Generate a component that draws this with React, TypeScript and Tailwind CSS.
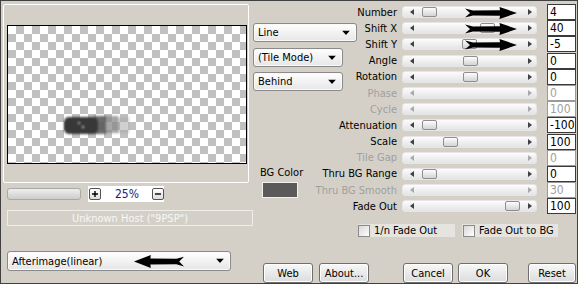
import React from "react";

type Row = { label: string; value: string; thumb?: number; disabled?: boolean; arrow?: boolean };

const rows: Row[] = [
  { label: "Number", value: "4", thumb: 19, arrow: true },
  { label: "Shift X", value: "40", thumb: 77, arrow: true },
  { label: "Shift Y", value: "-5", thumb: 59, arrow: true },
  { label: "Angle", value: "0", thumb: 60 },
  { label: "Rotation", value: "0", thumb: 60 },
  { label: "Phase", value: "0", disabled: true },
  { label: "Cycle", value: "100", disabled: true },
  { label: "Attenuation", value: "-100", thumb: 19 },
  { label: "Scale", value: "100", thumb: 40 },
  { label: "Tile Gap", value: "0", disabled: true },
  { label: "Thru BG Range", value: "0", thumb: 19 },
  { label: "Thru BG Smooth", value: "30", disabled: true },
  { label: "Fade Out", value: "100", thumb: 102 },
];

function BigArrow({ className }: { className?: string }) {
  return (
    <svg viewBox="0 0 52 12" className={className} preserveAspectRatio="none">
      <path
        d="M0 1.5 L8 3.4 L35 3.3 L34.5 0 L52 6 L34.5 12 L35 8.7 L8 8.6 L0 10.5 L5 6 Z"
        fill="#000"
      />
    </svg>
  );
}

function DropArrow({ className }: { className?: string }) {
  return (
    <svg width="8" height="5" viewBox="0 0 8 5" className={className}>
      <path d="M0 0 L8 0 L4 4.5 Z" fill="#000" />
    </svg>
  );
}

function Slider({ thumb, disabled, arrow }: { thumb?: number; disabled?: boolean; arrow?: boolean }) {
  const c = disabled ? "#a9a9a9" : "#404040";
  return (
    <div className="relative w-[135px] h-[12px] rounded-[3px] border border-[#e6e6e6] bg-gradient-to-b from-[#fcfcfc] to-[#e4e4e4]">
      <svg width="4" height="6" viewBox="0 0 4 6" className="absolute left-[7px] top-[2px]">
        <path d="M4 0 L0 3 L4 6 Z" fill={c} />
      </svg>
      <svg width="4" height="6" viewBox="0 0 4 6" className="absolute left-[125px] top-[2px]">
        <path d="M0 0 L4 3 L0 6 Z" fill={c} />
      </svg>
      {thumb !== undefined && (
        <div
          className="absolute top-0 h-[10px] w-[15px] rounded-[2px] border border-[#8e8e8e] bg-gradient-to-b from-[#fdfdfd] to-[#d4d4d4]"
          style={{ left: thumb }}
        />
      )}
      {arrow && <BigArrow className="absolute left-[62px] top-[0px] w-[52px] h-[12px]" />}
    </div>
  );
}

function Dropdown({ label, className, children }: { label: string; className?: string; children?: React.ReactNode }) {
  return (
    <div
      className={`relative flex items-center pl-[4px] rounded-[3px] border border-[#8a8a8a] bg-gradient-to-b from-[#ffffff] to-[#e6e6e6] shadow-[inset_0_0_0_1px_#fafafa] leading-none ${className ?? ""}`}
    >
      <span>{label}</span>
      {children}
      <DropArrow className="absolute right-[6px] top-1/2 -translate-y-1/2" />
    </div>
  );
}

function Btn({ label, className }: { label: string; className?: string }) {
  return (
    <div
      className={`h-[20px] flex items-center justify-center rounded-[3px] border border-[#6f6f6f] bg-gradient-to-b from-[#f8f8f8] to-[#dcdcdc] shadow-[inset_0_0_0_1px_#ffffff] leading-none ${className ?? ""}`}
    >
      {label}
    </div>
  );
}

function CheckBox() {
  return (
    <div className="w-[12px] h-[12px] border border-[#8a8a8a] bg-gradient-to-br from-[#d8d8d8] to-[#ffffff]" />
  );
}

export default function App() {
  return (
    <div className="font-['DejaVu_Sans_Condensed','Liberation_Sans',sans-serif] w-[578px] h-[284px] bg-[#d4d0c8] border border-[#404040] flex flex-col text-[11px] text-black overflow-hidden">
      <div className="flex h-[246px]">
        {/* left column */}
        <div className="w-[252px] pl-[2px] pt-[3px] flex flex-col">
          <div className="w-[246px] h-[179px] border border-white rounded-[2px] pt-[20px] pl-[3px]">
            <div className="w-[240px] h-[139px] border border-black bg-[conic-gradient(#c0c0c0_25%,#ffffff_0_50%,#c0c0c0_0_75%,#ffffff_0)] bg-[length:16px_16px]">
              <svg width="238" height="137" viewBox="0 0 238 137">
                <defs>
                  <filter id="blur" x="-20%" y="-40%" width="140%" height="180%">
                    <feGaussianBlur stdDeviation="1.3" />
                  </filter>
                </defs>
                <g filter="url(#blur)">
                  <rect x="108" y="91" width="13" height="16" fill="#a8a8a8" opacity="0.55" />
                  <rect x="96" y="90" width="14" height="17" fill="#8a8a8a" opacity="0.75" />
                  <rect x="86" y="90" width="12" height="18" fill="#5c5c5c" opacity="0.9" />
                  <rect x="56" y="91" width="34" height="17" rx="5" fill="#383838" />
                  <rect x="70" y="96" width="2" height="2" fill="#8a8a8a" />
                  <rect x="74" y="100" width="2" height="2" fill="#9a9a9a" />
                </g>
              </svg>
            </div>
          </div>
          <div className="flex items-center mt-[3px] ml-[4px] h-[16px]">
            <div className="w-[74px] h-[12px] rounded-[3px] border border-[#a9a9a9] bg-gradient-to-b from-[#eeeeee] to-[#cdcdcd]" />
            <div className="ml-[7px] w-[76px] h-[16px] bg-white flex items-center">
              <div className="ml-[1px] w-[12px] h-[12px] rounded-[2px] border border-[#555] bg-gradient-to-b from-[#ffffff] to-[#dddddd] flex items-center justify-center">
                <svg width="6" height="6" viewBox="0 0 6 6">
                  <path d="M3 0 V6 M0 3 H6" stroke="#000" strokeWidth="1.4" />
                </svg>
              </div>
              <span className="ml-[14px] text-[12px] leading-none text-[#1c1c7a]">25%</span>
              <div className="ml-[13px] w-[12px] h-[12px] rounded-[2px] border border-[#555] bg-gradient-to-b from-[#ffffff] to-[#dddddd] flex items-center justify-center">
                <svg width="6" height="6" viewBox="0 0 6 6">
                  <path d="M0 3 H6" stroke="#000" strokeWidth="1.4" />
                </svg>
              </div>
            </div>
          </div>
          <div className="mt-[8px] ml-[4px] w-[246px] h-[16px] border border-[#eeede9] flex items-center justify-center text-[#f7f7f7] text-[11px] leading-none">
            {'Unknown Host ("9PSP")'}
          </div>
        </div>

        {/* middle column */}
        <div className="w-[104px] pt-[22px] flex flex-col">
          <Dropdown label="Line" className="w-[104px] h-[19px]" />
          <Dropdown label="(Tile Mode)" className="mt-[6px] w-[90px] h-[19px]" />
          <Dropdown label="Behind" className="mt-[5px] w-[90px] h-[19px]" />
          <div className="mt-[75px] ml-[7px] h-[13px] leading-[13px]">BG Color</div>
          <div className="mt-[3px] ml-[9px] w-[36px] h-[16px] border border-[#f2f2f2] bg-[#5a5a5a]" />
        </div>

        {/* right column */}
        <div className="w-[220px] pt-[3px] flex flex-col">
          {rows.map((r) => (
            <div key={r.label} className="flex items-center h-[16.2px]">
              <div
                className={`w-[40px] flex justify-end whitespace-nowrap leading-none ${r.disabled ? "text-[#a0a0a0]" : "text-black"}`}
              >
                {r.label}
              </div>
              <div className="ml-[5px]">
                <Slider thumb={r.thumb} disabled={r.disabled} arrow={r.arrow} />
              </div>
              <div
                className={`ml-[10px] w-[29px] h-[16px] border bg-white flex items-center pl-[2px] text-[12px] leading-none ${r.disabled ? "border-[#9a9a9a] text-[#a0a0a0]" : "border-[#3a3a3a] text-black"}`}
              >
                {r.value}
              </div>
            </div>
          ))}
          <div className="flex mt-[10px] ml-[1px] h-[13px]">
            <div className="w-[97px] h-[13px] bg-[#e6e4df] flex items-center">
              <CheckBox />
              <span className="ml-[4px] leading-none">1/n Fade Out</span>
            </div>
            <div className="ml-[7px] w-[96px] h-[13px] bg-[#e6e4df] flex items-center pl-[1px]">
              <CheckBox />
              <span className="ml-[4px] leading-none">Fade Out to BG</span>
            </div>
          </div>
        </div>
      </div>

      {/* bottom row */}
      <div className="flex h-[36px]">
        <Dropdown label="Afterimage(linear)" className="ml-[6px] mt-[4px] w-[224px] h-[20px]">
          <BigArrow className="absolute left-[126px] top-[3px] w-[50px] h-[13px] -scale-x-100" />
        </Dropdown>
        <Btn label="Web" className="ml-[32px] mt-[16px] w-[50px]" />
        <Btn label="About..." className="ml-[6px] mt-[16px] w-[50px]" />
        <Btn label="Cancel" className="ml-[34px] mt-[16px] w-[50px]" />
        <Btn label="OK" className="ml-[5px] mt-[16px] w-[50px]" />
        <Btn label="Reset" className="ml-[20px] mt-[16px] w-[48px]" />
      </div>
    </div>
  );
}
